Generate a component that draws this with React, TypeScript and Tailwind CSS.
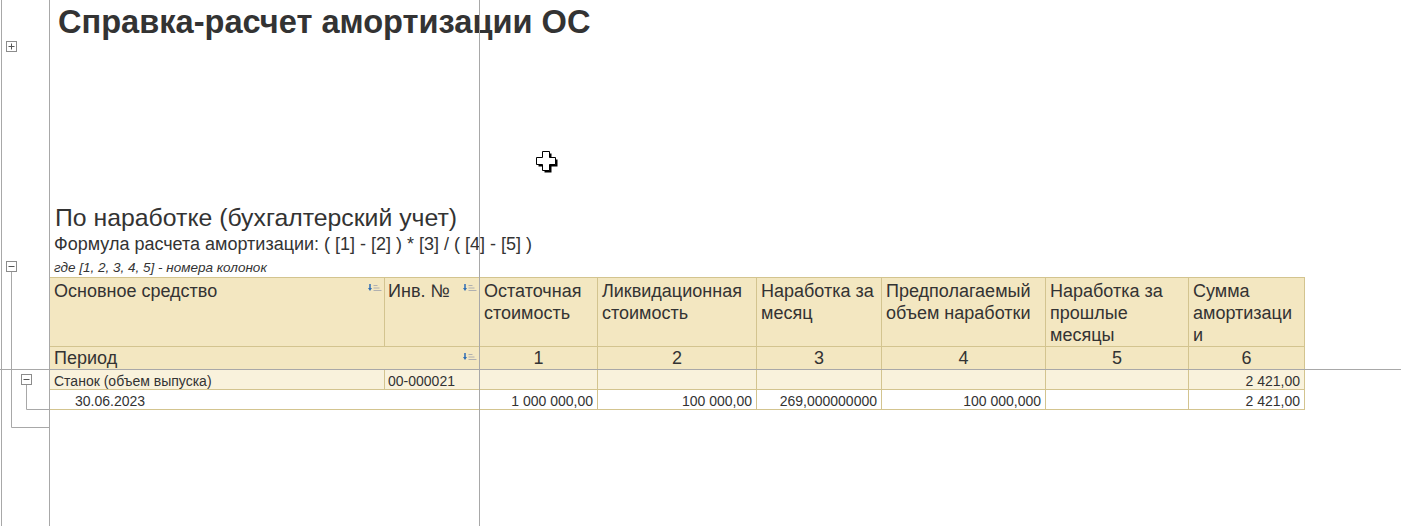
import React from "react";

const SortIcon = () => (
  <svg width="14" height="8" viewBox="0 0 14 8" className="absolute top-[6px] right-[2px]">
    <path d="M2 0v4.5" stroke="#2e6db4" strokeWidth="1.5" />
    <path d="M0 4h4L2 7z" fill="#2e6db4" />
    <path d="M5.5 1.5h4M5.5 4h6M5.5 6.5h8" stroke="#b0b0b0" strokeWidth="1" />
  </svg>
);

const Gutter = () => (
  <div className="w-[50px] shrink-0 border-r border-[#a8a8a8]">
    <svg width="49" height="526" viewBox="0 0 49 526">
      <path d="M1.5 0V526" stroke="#a8a8a8" />
      {/* collapsed group */}
      <rect x="6.5" y="41.5" width="10" height="10" fill="#fff" stroke="#8c8c8c" />
      <path d="M8.5 46.5h6M11.5 43.5v6" stroke="#555" />
      {/* outer group */}
      <path d="M11.5 271.5V427.5H49" stroke="#a8a8a8" fill="none" />
      <rect x="6.5" y="261.5" width="10" height="10" fill="#fff" stroke="#8c8c8c" />
      <path d="M8.5 266.5h6" stroke="#555" />
      {/* inner group */}
      <path d="M26.5 384.5V409.5H49" stroke="#a8a8a8" fill="none" />
      <rect x="21.5" y="374.5" width="10" height="10" fill="#fff" stroke="#8c8c8c" />
      <path d="M23.5 379.5h6" stroke="#555" />
    </svg>
  </div>
);

const head = "relative shrink-0 border-r border-[#d3c48f] bg-[#f3e7c1]";
const grp = "shrink-0 border-r border-[#d3c48f] bg-[#f9f2dc] leading-[22px] whitespace-nowrap";
const det = "shrink-0 border-r border-[#d3c48f] bg-white leading-[22px] whitespace-nowrap";

const App: React.FC = () => {
  return (
    <div className="relative flex w-[1401px] h-[526px] overflow-hidden bg-white text-[#333] font-['Liberation_Sans',Arial,sans-serif]">
      <Gutter />

      <div className="flex-1 flex flex-col">
        <div className="h-[41px] pl-[8px] text-[32.6px] font-bold leading-[43px] whitespace-nowrap">
          Справка-расчет амортизации ОС
        </div>
        <div className="h-[162px]" />
        <div className="h-[30px] pl-[5px] text-[24.8px] leading-[30px] whitespace-nowrap">
          По наработке (бухгалтерский учет)
        </div>
        <div className="h-[23px] pl-[4px] text-[18px] leading-[23px] whitespace-nowrap">
          Формула расчета амортизации: ( [1] - [2] ) * [3] / ( [4] - [5] )
        </div>
        <div className="h-[21px] pl-[4px] text-[13.5px] italic leading-[24px] whitespace-nowrap">
          где [1, 2, 3, 4, 5] - номера колонок
        </div>

        <div className="flex flex-col w-[1255px] border-t border-[#d3c48f] text-[18px] leading-[22px]">
          <div className="flex h-[69px] border-b border-[#d3c48f]">
            <div className={`${head} w-[335px] pl-[4px] pt-[2px]`}>
              Основное средство
              <SortIcon />
            </div>
            <div className={`${head} w-[95px] pl-[3px] pt-[2px]`}>
              Инв. №
              <SortIcon />
            </div>
            <div className={`${head} w-[118px] pl-[4px] pt-[2px]`}>Остаточная стоимость</div>
            <div className={`${head} w-[159px] pl-[4px] pt-[2px]`}>Ликвидационная стоимость</div>
            <div className={`${head} w-[125px] pl-[4px] pt-[2px]`}>Наработка за месяц</div>
            <div className={`${head} w-[164px] pl-[4px] pt-[2px]`}>Предполагаемый объем наработки</div>
            <div className={`${head} w-[143px] pl-[4px] pt-[2px]`}>Наработка за прошлые месяцы</div>
            <div className={`${head} w-[116px] pl-[4px] pt-[2px]`}>
              Сумма амортизаци
              <br />и
            </div>
          </div>

          <div className="flex h-[23px] border-b border-[#d3c48f]">
            <div className={`${head} w-[430px] pl-[4px]`}>
              Период
              <SortIcon />
            </div>
            <div className={`${head} w-[118px] text-center`}>1</div>
            <div className={`${head} w-[159px] text-center`}>2</div>
            <div className={`${head} w-[125px] text-center`}>3</div>
            <div className={`${head} w-[164px] text-center`}>4</div>
            <div className={`${head} w-[143px] text-center`}>5</div>
            <div className={`${head} w-[116px] text-center`}>6</div>
          </div>

          <div className="flex h-[20px] border-b border-[#d3c48f] text-[14px]">
            <div className={`${grp} w-[335px] pl-[4px]`}>Станок (объем выпуска)</div>
            <div className={`${grp} w-[95px] pl-[3px]`}>00-000021</div>
            <div className={`${grp} w-[118px]`} />
            <div className={`${grp} w-[159px]`} />
            <div className={`${grp} w-[125px]`} />
            <div className={`${grp} w-[164px]`} />
            <div className={`${grp} w-[143px]`} />
            <div className={`${grp} w-[116px] pr-[4px] text-right`}>2 421,00</div>
          </div>

          <div className="flex h-[20px] border-b border-[#d3c48f] text-[14px]">
            <div className={`${det} w-[430px] pl-[25px]`}>30.06.2023</div>
            <div className={`${det} w-[118px] pr-[4px] text-right`}>1 000 000,00</div>
            <div className={`${det} w-[159px] pr-[4px] text-right`}>100 000,00</div>
            <div className={`${det} w-[125px] pr-[4px] text-right`}>269,000000000</div>
            <div className={`${det} w-[164px] pr-[4px] text-right`}>100 000,000</div>
            <div className={`${det} w-[143px]`} />
            <div className={`${det} w-[116px] pr-[4px] text-right`}>2 421,00</div>
          </div>
        </div>
      </div>

      {/* frozen area split lines */}
      <div className="absolute left-[479px] top-0 h-full w-px bg-[#a8a8a8]" />
      <div className="absolute left-0 top-[369px] h-px w-full bg-[#a8a8a8]" />

      {/* cell cursor */}
      <svg width="24" height="24" viewBox="0 0 24 24" className="absolute left-[536px] top-[151px]">
        <polygon
          points="8.5,2.5 15.5,2.5 15.5,8.5 21.5,8.5 21.5,15.5 15.5,15.5 15.5,21.5 8.5,21.5 8.5,15.5 2.5,15.5 2.5,8.5 8.5,8.5"
          fill="#000"
        />
        <polygon
          points="6.5,0.5 13.5,0.5 13.5,6.5 19.5,6.5 19.5,13.5 13.5,13.5 13.5,19.5 6.5,19.5 6.5,13.5 0.5,13.5 0.5,6.5 6.5,6.5"
          fill="#fff"
          stroke="#000"
        />
      </svg>
    </div>
  );
};

export default App;
